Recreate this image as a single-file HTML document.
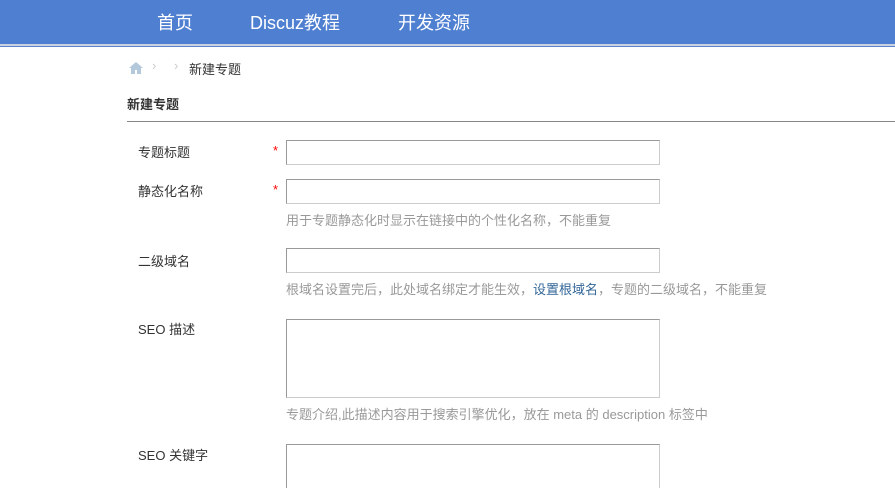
<!DOCTYPE html>
<html><head><meta charset="utf-8"><style>
*{margin:0;padding:0;box-sizing:border-box}
html,body{width:895px;height:488px;overflow:hidden}
body{background:#fff;font-family:"Liberation Sans","Microsoft YaHei","Noto Sans CJK SC",sans-serif;font-size:13px;color:#333;position:relative}
.hd{position:absolute;left:0;top:0;width:895px;height:46px;background:#4f7fd1;border-bottom:2px solid #c8d2e0}
.hd a{position:absolute;top:9px;color:#fff;font-size:18px;text-decoration:none}
.abs{position:absolute}
.in{position:absolute;left:286px;width:374px;border:1px solid #ccc;border-top-color:#999;border-left-color:#999;background:#fff}
.lbl{position:absolute;left:138px;font-size:13px;color:#333}
.tip{position:absolute;left:286px;font-size:13px;color:#999}
.star{position:absolute;left:273px;color:#f00;font-size:13px}
</style></head><body>
<div class="hd"><a style="left:157px">首页</a><a style="left:250px">Discuz教程</a><a style="left:398px">开发资源</a></div>
<div class="abs" style="top:46px;left:0;width:895px;height:1px;background:#5b86c9"></div>
<svg class="abs" style="left:128px;top:61px" width="16" height="14" viewBox="0 0 16 14"><path d="M8 1L1 7h2v6h4V9h2v4h4V7h2z" fill="#b4c8dc"/></svg>
<span class="abs" style="left:152px;top:58px;color:#ccc">›</span>
<span class="abs" style="left:174px;top:58px;color:#ccc">›</span>
<span class="abs" style="left:189px;top:59px;color:#333">新建专题</span>
<span class="abs" style="left:127px;top:94px;font-weight:bold;color:#333">新建专题</span>
<div class="abs" style="left:127px;top:121px;width:768px;height:1px;background:#888"></div>
<span class="lbl" style="top:142px">专题标题</span><span class="star" style="top:143px">*</span>
<div class="in" style="top:140px;height:25px"></div>
<span class="lbl" style="top:181px">静态化名称</span><span class="star" style="top:182px">*</span>
<div class="in" style="top:179px;height:25px"></div>
<span class="tip" style="top:210px">用于专题静态化时显示在链接中的个性化名称，不能重复</span>
<span class="lbl" style="top:251px">二级域名</span>
<div class="in" style="top:248px;height:25px"></div>
<span class="tip" style="top:279px">根域名设置完后，此处域名绑定才能生效，<span style="color:#336699">设置根域名</span>，专题的二级域名，不能重复</span>
<span class="lbl" style="top:319px">SEO 描述</span>
<div class="in" style="top:319px;height:79px"></div>
<span class="tip" style="top:404px">专题介绍,此描述内容用于搜索引擎优化，放在 meta 的 description 标签中</span>
<span class="lbl" style="top:445px">SEO 关键字</span>
<div class="in" style="top:444px;height:60px"></div>
</body></html>
